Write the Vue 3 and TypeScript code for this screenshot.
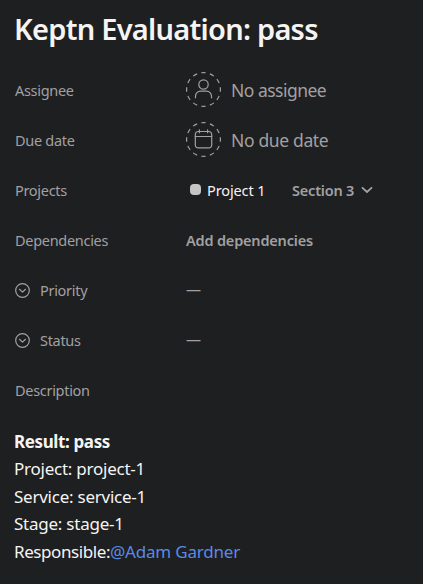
<script setup lang="ts">
interface CustomField {
  name: string
  value: string
}

const customFields: CustomField[] = [
  { name: 'Priority', value: '—' },
  { name: 'Status', value: '—' },
]

const details: string[] = ['Project: project-1', 'Service: service-1', 'Stage: stage-1']
</script>

<template>
  <main class="task">
    <h1 class="title">Keptn Evaluation: pass</h1>

    <div class="row">
      <span class="label">Assignee</span>
      <div class="value">
        <svg class="avatar" viewBox="0 0 35 35">
          <circle class="ring" cx="17.5" cy="17.5" r="16.9" pathLength="120" />
          <circle cx="17.5" cy="12.5" r="4.7" />
          <path d="M9.5 25.8v-1.6a5 5 0 0 1 5-5h6a5 5 0 0 1 5 5v1.6" />
        </svg>
        <span class="empty no-assignee">No assignee</span>
      </div>
    </div>

    <div class="row">
      <span class="label">Due date</span>
      <div class="value">
        <svg class="avatar" viewBox="0 0 35 35">
          <circle class="ring" cx="17.5" cy="17.5" r="16.9" pathLength="120" />
          <rect x="9.3" y="9.5" width="16.4" height="16.4" rx="3.2" />
          <path d="M9.3 14.5h16.4M13.4 7.9v2.8M21.6 7.9v2.8" />
        </svg>
        <span class="empty">No due date</span>
      </div>
    </div>

    <div class="row">
      <span class="label">Projects</span>
      <div class="value project-value">
        <i class="dot"></i>
        <span class="project">Project 1</span>
        <span class="section">Section 3</span>
        <svg class="chevron" viewBox="0 0 12 8"><path d="M1.5 1.8 6 6l4.5-4.2" /></svg>
      </div>
    </div>

    <div class="row">
      <span class="label">Dependencies</span>
      <div class="value"><span class="add">Add dependencies</span></div>
    </div>

    <div v-for="field in customFields" :key="field.name" class="row">
      <span class="label custom">
        <svg class="field-icon" viewBox="0 0 15 15">
          <circle cx="7.5" cy="7.5" r="6.8" />
          <path d="M4.5 6.3 7.5 9.1l3-2.8" />
        </svg>
        {{ field.name }}
      </span>
      <div class="value"><span class="dash">{{ field.value }}</span></div>
    </div>

    <div class="row"><span class="label">Description</span></div>

    <section class="description">
      <p class="result"><b>Result: pass</b></p>
      <p v-for="line in details" :key="line">{{ line }}</p>
      <p class="responsible">Responsible:<a class="mention">@Adam Gardner</a></p>
    </section>
  </main>
</template>

<style>
body {
  background: #1e1f21;
}
</style>

<style scoped>
.task {
  box-sizing: border-box;
  height: 584px;
  overflow: hidden;
  padding-left: 14px;
  background: #1e1f21;
  color: #a2a0a2;
  font-family: "Noto Sans", "Open Sans", sans-serif;
  white-space: nowrap;
}
.title {
  height: 65px;
  margin: 0;
  padding-top: 9px;
  box-sizing: border-box;
  color: #f5f4f3;
  font-size: 29px;
  font-weight: 600;
  line-height: 40px;
  letter-spacing: -0.74px;
}
.row {
  display: flex;
  align-items: center;
  height: 50px;
  padding-left: 1px;
}
.label {
  width: 171px;
  flex: none;
  font-size: 14.5px;
  letter-spacing: -0.3px;
}
.custom {
  display: flex;
  align-items: center;
  gap: 10px;
}
.value {
  display: flex;
  align-items: center;
}
.project-value {
  margin-top: -1px;
}
svg {
  flex: none;
  fill: none;
  stroke: #a2a0a2;
  stroke-width: 1.2;
  stroke-linecap: round;
  stroke-linejoin: round;
}
.avatar {
  width: 35px;
  height: 35px;
  margin-top: -1px;
}
.ring {
  stroke-dasharray: 5.2 4.8;
  stroke-dashoffset: 2.6;
  stroke-linecap: butt;
}
.empty {
  margin-left: 10px;
  font-size: 17.5px;
  letter-spacing: -0.35px;
}
.no-assignee {
  letter-spacing: -0.52px;
}
.dot {
  width: 11px;
  height: 11px;
  margin-left: 4px;
  border-radius: 4px;
  background: #c7c4c4;
}
.project {
  width: 85px;
  margin-left: 6px;
  color: #f5f4f3;
  font-size: 14.5px;
  font-weight: 450;
  letter-spacing: -0.12px;
}
.section {
  font-size: 14.5px;
  font-weight: 600;
  letter-spacing: -0.2px;
}
.chevron {
  width: 12px;
  height: 8px;
  margin-left: 7px;
  stroke-width: 1.8;
}
.add {
  font-size: 14.5px;
  font-weight: 600;
  letter-spacing: -0.18px;
}
.field-icon {
  width: 15px;
  height: 15px;
}
.dash {
  margin-top: -2px;
  font-size: 15px;
}
.description {
  padding-top: 12.6px;
  color: #f5f4f3;
  font-size: 17px;
  line-height: 27.5px;
  letter-spacing: -0.24px;
}
.description p {
  margin: 0;
}
.result {
  letter-spacing: -0.38px;
}
.responsible {
  letter-spacing: -0.42px;
}
.mention {
  color: #5a8ae6;
  letter-spacing: -0.2px;
}
</style>
